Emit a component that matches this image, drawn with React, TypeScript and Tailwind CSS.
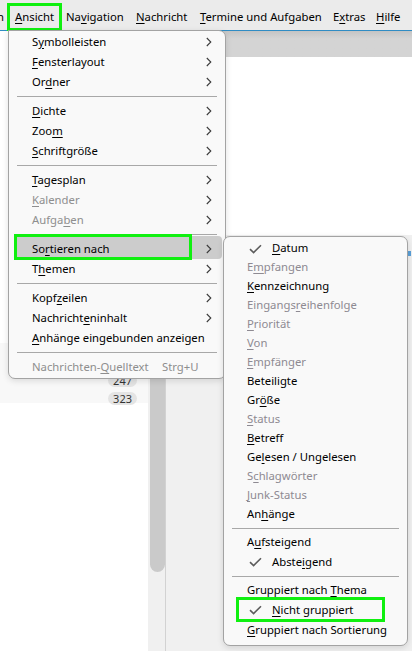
import React from "react";

type Entry =
  | { sep: true }
  | { label: string; disabled?: boolean; sub?: boolean; shortcut?: string; checked?: boolean; mark?: boolean; hover?: boolean; h?: string };

// "&" marks the access key letter
const Label = ({ t }: { t: string }) => {
  const i = t.indexOf("&");
  if (i < 0) return <>{t}</>;
  return (
    <>
      {t.slice(0, i)}
      <span className="underline decoration-1 underline-offset-[2px]">{t[i + 1]}</span>
      {t.slice(i + 2)}
    </>
  );
};

const Chevron = () => (
  <svg width="6" height="10" viewBox="0 0 6 10" fill="none">
    <polyline points="0.8,1 4.8,5 0.8,9" stroke="#3a3a3a" strokeWidth="1.1" />
  </svg>
);

const Check = () => (
  <svg width="13" height="10" viewBox="0 0 13 10" fill="none">
    <polyline points="1,5.2 4.6,8.6 12,1.2" stroke="#5c5c5c" strokeWidth="1.6" />
  </svg>
);

const mainMenu: Entry[] = [
  { label: "S&ymbolleisten", sub: true },
  { label: "&Fensterlayout", sub: true },
  { label: "Or&dner", sub: true },
  { sep: true },
  { label: "&Dichte", sub: true },
  { label: "Zoo&m", sub: true },
  { label: "&Schriftgröße", sub: true },
  { sep: true },
  { label: "&Tagesplan", sub: true },
  { label: "&Kalender", sub: true, disabled: true },
  { label: "Aufga&ben", sub: true, disabled: true },
  { sep: true },
  { label: "So&rtieren nach", sub: true, hover: true },
  { label: "T&hemen", sub: true },
  { sep: true },
  { label: "Kopf&zeilen", sub: true },
  { label: "Nachricht&eninhalt", sub: true },
  { label: "&Anhänge eingebunden anzeigen" },
  { sep: true },
  { label: "Nachrichten-&Quelltext", disabled: true, shortcut: "Strg+U" },
];

const sortMenu: Entry[] = [
  { label: "&Datum", checked: true },
  { label: "E&mpfangen", disabled: true },
  { label: "&Kennzeichnung" },
  { label: "Eingangs&reihenfolge", disabled: true },
  { label: "&Priorität", disabled: true },
  { label: "&Von", disabled: true },
  { label: "&Empfänger", disabled: true },
  { label: "Beteiligte" },
  { label: "Gr&öße" },
  { label: "&Status", disabled: true },
  { label: "&Betreff" },
  { label: "Ge&lesen / Ungelesen" },
  { label: "S&chlagwörter", disabled: true },
  { label: "&Junk-Status", disabled: true },
  { label: "An&hänge" },
  { sep: true },
  { label: "A&ufsteigend", h: "h-5" },
  { label: "Abste&igend", checked: true, h: "h-5" },
  { sep: true },
  { label: "Gruppiert nach &Thema", h: "h-5" },
  { label: "&Nicht gruppiert", checked: true, mark: true, h: "h-5" },
  { label: "&Gruppiert nach Sortierung", h: "h-5" },
];

const topItems = [
  { t: "&Ansicht", w: "w-[51px]" },
  { t: "Na&vigation", w: "w-[70px]" },
  { t: "&Nachricht", w: "w-[64px]" },
  { t: "&Termine und Aufgaben", w: "w-[133px]" },
  { t: "E&xtras", w: "w-[43px]" },
  { t: "&Hilfe", w: "w-[37px]" },
];

export default function App() {
  return (
    <div className="relative w-[412px] h-[651px] overflow-hidden bg-white font-['Noto_Sans',sans-serif] text-[11.3px] text-black">
      {/* menubar */}
      <div className="relative flex h-[30px] items-center bg-[#ebebeb] pt-[4px]">
        <span className="-ml-[3px] w-[12px] overflow-hidden">n</span>
        {topItems.map((m) => (
          <div key={m.t} className={`${m.w} shrink-0 pl-[6px] whitespace-nowrap`}>
            <Label t={m.t} />
          </div>
        ))}
        <div className="absolute left-[7px] top-[3px] h-[28px] w-[55px] border-[3px] border-[#10f010]" />
      </div>
      <div className="h-px bg-[#2f8cc4]" />

      {/* window body */}
      <div className="flex h-[620px]">
        <div className="flex w-[148px] flex-col bg-white">
          <div className="h-[312px]" />
          <div className="flex h-[60px] flex-col items-end justify-end bg-[#f8f8f8] pr-[11px] text-[11px] text-[#333]">
            <div className="-mb-[2px] flex flex-col gap-[5px]">
              <span className="rounded-full bg-[#e4e4e4] px-[5px] leading-[13px]">247</span>
              <span className="rounded-full bg-[#e4e4e4] px-[5px] leading-[13px]">323</span>
            </div>
          </div>
        </div>
        <div className="flex w-[17px] flex-col bg-[#f0f0f0]">
          <div className="ml-[2px] h-[541px] w-[15px] rounded-b-full bg-[#cacaca]" />
        </div>
        <div className="w-px bg-[#d2d2d2]" />
        <div className="flex flex-1 flex-col bg-[#f0f0f0]">
          <div className="h-[26px] bg-gradient-to-b from-[#c4c4c4] to-[#d4d4d4] to-[30%]" />
          <div className="h-[178px] bg-white" />
          <div className="flex flex-1 justify-end pr-[1px] pt-[16px]">
            <div className="h-[5px] w-[3px] bg-[#5aa0d8]" />
          </div>
        </div>
      </div>

      {/* Ansicht menu */}
      <div className="absolute left-[8px] top-[30px] w-[218px] rounded-b-[7px] rounded-tr-[7px] border border-[#a3a3a3] bg-[#f9f9f9] py-px shadow-[0_2px_6px_rgba(0,0,0,0.12)]">
        {mainMenu.map((e, i) =>
          "sep" in e ? (
            <div key={i} className="flex h-[9px] items-center px-[8px]">
              <div className="h-px w-full bg-[#a8a8a8]" />
            </div>
          ) : (
            <div
              key={i}
              className={`relative flex h-5 items-center whitespace-nowrap pl-[23px] pr-[13px] ${e.disabled ? "text-[#8e8e8e]" : ""}`}
            >
              {e.hover && (
                <>
                  <div className="absolute left-[5px] right-[3px] top-[-3px] bottom-0 rounded-[4px] bg-[#cccccc]" />
                  <div className="absolute left-[5px] w-[178px] top-[-5px] bottom-[-1px] border-[3px] border-[#10f010]" />
                </>
              )}
              <span className="relative flex-1">
                <Label t={e.label} />
              </span>
              {e.shortcut && <span className="w-[50px]">{e.shortcut}</span>}
              {e.sub && (
                <span className="relative flex">
                  <Chevron />
                </span>
              )}
            </div>
          )
        )}
      </div>

      {/* Sortieren nach submenu */}
      <div className="absolute left-[223px] top-[236px] h-[410px] w-[185px] rounded-[7px] border border-[#a3a3a3] bg-[#f9f9f9] pt-[2px] shadow-[0_2px_6px_rgba(0,0,0,0.12)]">
        {sortMenu.map((e, i) =>
          "sep" in e ? (
            <div key={i} className="flex h-[8px] items-center px-[8px]">
              <div className="h-px w-full bg-[#a8a8a8]" />
            </div>
          ) : (
            <div
              key={i}
              className={`relative flex ${e.h ?? "h-[19px]"} items-center whitespace-nowrap ${e.checked ? "pl-[25px]" : "pl-[23px]"} ${e.disabled ? "text-[#8e8a92]" : ""}`}
            >
              {e.checked && (
                <span className="mr-[10px] flex w-[13px]">
                  <Check />
                </span>
              )}
              <span>
                <Label t={e.label} />
              </span>
              {e.mark && (
                <div className="absolute left-[12px] w-[149px] top-[-3px] bottom-[-2px] border-[3px] border-[#10f010]" />
              )}
            </div>
          )
        )}
      </div>
    </div>
  );
}
